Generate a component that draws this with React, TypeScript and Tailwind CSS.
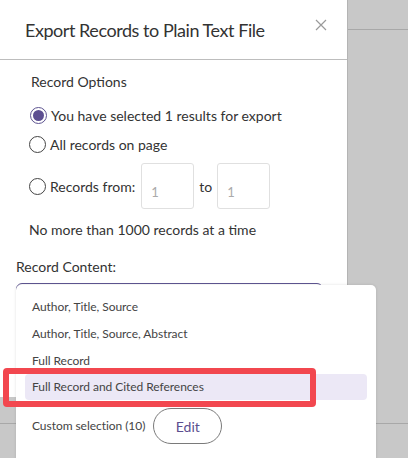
import React from 'react';

const Radio = ({ checked }: { checked?: boolean }) => (
    <span
        className={
            "flex h-[17px] w-[17px] shrink-0 items-center justify-center rounded-full border " +
            (checked ? "border-[#5d5390]" : "border-[#444]")
        }
    >
        {checked && <span className="h-[11px] w-[11px] rounded-full bg-[#5d4f91]"></span>}
    </span>
);

const App = () => {
    const options = [
        "Author, Title, Source",
        "Author, Title, Source, Abstract",
        "Full Record",
    ];

    return (
        <div
            className="relative h-[458px] w-[408px] overflow-hidden bg-[#c8c8c8] text-[#333]"
            style={{ fontFamily: "Lato, 'Noto Sans', sans-serif" }}
        >
            {/* page behind the modal */}
            <div className="absolute left-0 right-0 top-[29px] h-px bg-[#a8a8a8]"></div>
            <div className="absolute left-0 right-0 top-[423px] h-px bg-[#a8a8a8]"></div>

            {/* modal */}
            <div className="relative h-[397px] w-[348px] border-r border-[#b4b4b4] bg-white">
                <div className="flex h-[60px] items-start justify-between border-b border-[#bdbdbd] pl-[25px] pr-[20px] pt-[17px]">
                    <h2 className="text-[18px] tracking-[-0.45px]">Export Records to Plain Text File</h2>
                    <svg className="mt-[2px]" width="12" height="12" viewBox="0 0 12 12" fill="none" stroke="#9a9a9a" strokeWidth="1.2">
                        <path d="M1 1l10 10M11 1L1 11" />
                    </svg>
                </div>

                <div className="pl-[31px] pt-[12px] text-[14px]">
                    <p className="leading-[20px]">Record Options</p>
                    <div className="mt-[13px] flex flex-col">
                        <label className="flex h-[20px] items-center gap-[4px] -ml-[1px]">
                            <Radio checked />
                            <span>You have selected 1 results for export</span>
                        </label>
                        <label className="mt-[9px] flex h-[20px] items-center gap-[4px] -ml-[2px]">
                            <Radio />
                            <span>All records on page</span>
                        </label>
                        <div className="mt-[9px] flex items-center gap-[4px] -ml-[2px]">
                            <Radio />
                            <span>Records from:</span>
                            <input
                                className="ml-[2px] h-[46px] w-[53px] rounded-[3px] border border-[#e0e0e0] px-[9px] pt-[12px] text-[13px] placeholder-[#aaa] outline-none"
                                placeholder="1"
                            />
                            <span className="mx-[1px]">to</span>
                            <input
                                className="h-[46px] w-[53px] rounded-[3px] border border-[#e0e0e0] px-[9px] pt-[12px] text-[13px] placeholder-[#aaa] outline-none"
                                placeholder="1"
                            />
                        </div>
                    </div>
                    <p className="mt-[11px] -ml-[2px] leading-[20px]">No more than 1000 records at a time</p>
                </div>

                <div className="pl-[16px] pt-[17px] text-[14px]">
                    <p className="leading-[20px]">Record Content:</p>
                    <div className="mt-[6px] h-[50px] w-[307px] rounded-[6px] border border-[#5e5591]"></div>
                </div>
            </div>

            {/* dropdown menu */}
            <div className="absolute left-[16px] top-[285px] h-[200px] w-[360px] rounded-[5px] bg-white shadow-[0_0_3px_rgba(0,0,0,0.12)]">
                <ul className="flex flex-col pl-[9px] pr-[9px] pt-[9px] text-[12px] tracking-[-0.05px] text-[#444]">
                    {options.map((o) => (
                        <li key={o} className="flex h-[26.8px] items-center pl-[7px]">{o}</li>
                    ))}
                    <li className="flex h-[26px] items-center rounded-[4px] bg-[#ece8f6] pl-[7px]">Full Record and Cited References</li>
                    <li className="mt-[8px] flex items-center gap-[8px] pl-[7px]">
                        <span>Custom selection (10)</span>
                        <button className="h-[36px] w-[69px] rounded-full border-[1.5px] border-[#7a7a7a] text-[14px] tracking-normal text-[#5b4e8f]">
                            Edit
                        </button>
                    </li>
                </ul>
            </div>

            {/* annotation */}
            <div className="absolute left-[3px] top-[368px] h-[39px] w-[313px] rounded-[4px] border-[6px] border-[#f2474f]"></div>
        </div>
    );
};

export default App;
